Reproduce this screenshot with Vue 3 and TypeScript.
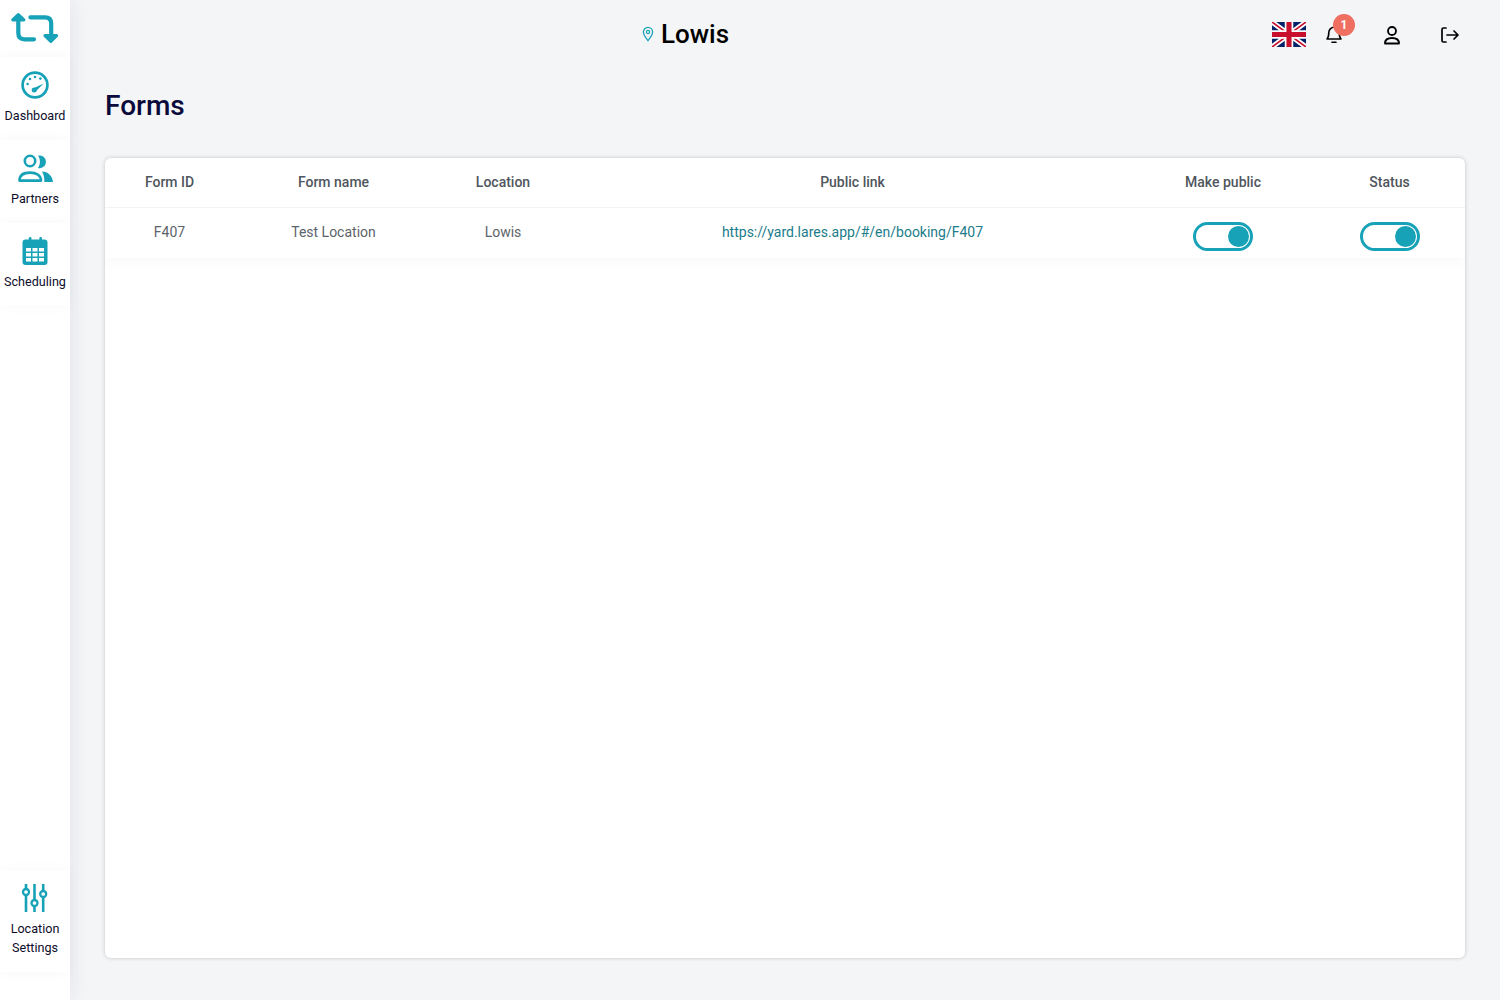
<script setup lang="ts">
interface NavItem { label: string; icon: string }
const navItems: NavItem[] = [
  { label: 'Dashboard', icon: 'dash' },
  { label: 'Partners', icon: 'partners' },
  { label: 'Scheduling', icon: 'cal' },
]
const headers: string[] = ['Form ID', 'Form name', 'Location', 'Public link', 'Make public', 'Status']
</script>

<template>
  <div class="page">
    <aside class="sidebar">
      <div class="logo">
        <svg width="70" height="57" viewBox="0 0 70 57" fill="none" stroke="#17a2b8" stroke-linecap="round" stroke-linejoin="round">
          <path d="M18.3 21 V33 Q18.3 39.3 24.6 39.3 H34" stroke-width="4.2"/>
          <path d="M30.4 17.3 H45 Q51.2 17.3 51.2 23.5 V34" stroke-width="4.2"/>
          <path d="M18.3 14.6 L12.8 20 H23.8 Z" fill="#17a2b8" stroke-width="3.2"/>
          <path d="M50.8 41.4 L45 35.6 H56.6 Z" fill="#17a2b8" stroke-width="3.2"/>
        </svg>
      </div>
      <a v-for="item in navItems" :key="item.icon" class="nav-item">
        <svg v-if="item.icon === 'dash'" width="32" height="32" viewBox="0 0 32 32" fill="none">
          <circle cx="16" cy="16" r="12.4" stroke="#17a2b8" stroke-width="2.7"/>
          <circle cx="15.2" cy="21" r="2.5" fill="#17a2b8"/>
          <path d="M14 19.6 L24.6 14.6 L16.6 22.4 Z" fill="#17a2b8"/>
          <g fill="#17a2b8"><circle cx="8.6" cy="15" r="1.3"/><circle cx="11" cy="10" r="1.3"/><circle cx="16" cy="8" r="1.3"/><circle cx="21.4" cy="9.6" r="1.3"/></g>
        </svg>
        <svg v-else-if="item.icon === 'partners'" width="36" height="32" viewBox="0 0 36 32" fill="none">
          <circle cx="13" cy="9" r="5.2" stroke="#17a2b8" stroke-width="2.6"/>
          <path d="M2.5 28.6 C2.5 23 7 20.6 13 20.6 C19 20.6 24 23 24 28.6 Z" stroke="#17a2b8" stroke-width="2.6" stroke-linejoin="round"/>
          <path d="M21 3.6 A6.4 6.4 0 1 1 21 16 C23.6 12.6 23.6 7.4 21 3.6 Z" fill="#17a2b8"/>
          <path d="M25 19.6 C31 19.6 35.4 24 36 30 H27.4 C27.4 26 26.8 22.6 25 19.6 Z" fill="#17a2b8"/>
        </svg>
        <svg v-else width="32" height="32" viewBox="0 0 32 32" fill="none">
          <rect x="9.8" y="2" width="2.6" height="6" rx="1.2" fill="#17a2b8"/>
          <rect x="20.4" y="2" width="2.6" height="6" rx="1.2" fill="#17a2b8"/>
          <rect x="3.5" y="4.5" width="25" height="25.5" rx="3" fill="#17a2b8"/>
          <g fill="#fff">
            <rect x="7" y="13" width="5" height="3.5"/><rect x="13.5" y="13" width="5" height="3.5"/><rect x="20" y="13" width="5" height="3.5"/>
            <rect x="7" y="18" width="5" height="3.5"/><rect x="13.5" y="18" width="5" height="3.5"/><rect x="20" y="18" width="5" height="3.5"/>
            <rect x="7" y="23" width="5" height="3.5"/><rect x="13.5" y="23" width="5" height="3.5"/><rect x="20" y="23" width="5" height="3.5"/>
          </g>
        </svg>
        <span class="nav-label">{{ item.label }}</span>
      </a>
      <div class="spacer"></div>
      <a class="nav-item bottom">
        <svg width="32" height="32" viewBox="0 0 32 32" fill="none" stroke="#17a2b8">
          <g stroke-width="2.6">
            <path d="M7 2 V6.5 M7 13.5 V30"/>
            <path d="M15.5 2 V17.5 M15.5 24.5 V30"/>
            <path d="M24.2 2 V8.5 M24.2 15.5 V30"/>
          </g>
          <g stroke-width="2.3">
            <circle cx="7" cy="10" r="3"/>
            <circle cx="15.5" cy="21" r="3"/>
            <circle cx="24.2" cy="12" r="3"/>
          </g>
        </svg>
        <span class="nav-label first">Location</span>
        <span class="nav-label">Settings</span>
      </a>
      <div class="sidebar-end"></div>
    </aside>

    <main class="main">
      <header class="topbar">
        <div class="place">
          <svg width="12" height="16" viewBox="0 0 12 16" fill="none" stroke="#17a2b8" stroke-width="1.3">
            <path d="M6 14.6 C3.5 11.5 1.4 8.8 1.4 6 A4.6 4.6 0 0 1 10.6 6 C10.6 8.8 8.5 11.5 6 14.6 Z"/>
            <circle cx="6" cy="6" r="1.6"/>
          </svg>
          <span class="place-name">Lowis</span>
        </div>
        <div class="actions">
          <svg class="flag" width="34" height="25" viewBox="0 0 60 44" preserveAspectRatio="none">
            <rect width="60" height="44" fill="#012169"/>
            <path d="M0 0 L60 44 M60 0 L0 44" stroke="#fff" stroke-width="9"/>
            <path d="M0 0 L60 44 M60 0 L0 44" stroke="#c8102e" stroke-width="3"/>
            <path d="M30 0 V44 M0 22 H60" stroke="#fff" stroke-width="15"/>
            <path d="M30 0 V44 M0 22 H60" stroke="#c8102e" stroke-width="9"/>
          </svg>
          <div class="bell">
            <svg width="20" height="22" viewBox="0 0 20 22" fill="none" stroke="#000" stroke-width="1.6" stroke-linejoin="round">
              <path d="M3 16 C4.5 14.5 4.8 12.5 4.8 9.5 A5.2 5.2 0 0 1 15.2 9.5 C15.2 12.5 15.5 14.5 17 16 Z"/>
              <path d="M8 19.2 H12" stroke-linecap="round"/>
            </svg>
            <span class="badge">1</span>
          </div>
          <svg class="user" width="20" height="22" viewBox="0 0 20 22" fill="none" stroke="#000" stroke-width="1.8">
            <circle cx="10" cy="7" r="4"/>
            <path d="M3 19.5 C3 15.5 6 14 10 14 C14 14 17 15.5 17 19.5 Z" stroke-linejoin="round"/>
          </svg>
          <svg class="logout" width="20" height="20" viewBox="0 0 20 20" fill="none" stroke="#000" stroke-width="1.7" stroke-linecap="round" stroke-linejoin="round">
            <path d="M6 3 H3.5 Q2 3 2 4.5 V15.5 Q2 17 3.5 17 H6"/>
            <path d="M7 10 H18 M14 6 L18 10 L14 14"/>
          </svg>
        </div>
      </header>

      <h1 class="title">Forms</h1>

      <section class="card">
        <div class="row head">
          <div v-for="h in headers" :key="h" class="cell">{{ h }}</div>
        </div>
        <div class="row body">
          <div class="cell">F407</div>
          <div class="cell">Test Location</div>
          <div class="cell">Lowis</div>
          <div class="cell link">https://yard.lares.app/#/en/booking/F407</div>
          <div class="cell toggle-cell"><span class="toggle"><span class="knob"></span></span></div>
          <div class="cell toggle-cell"><span class="toggle"><span class="knob"></span></span></div>
        </div>
      </section>
    </main>
  </div>
</template>

<style>
html, body { background: #f4f5f7; }
</style>

<style scoped>
.page {
  display: flex;
  width: 1500px;
  height: 1000px;
  background: #f4f5f7;
  font-family: Roboto, "Liberation Sans", sans-serif;
}
.sidebar {
  width: 70px;
  flex: none;
  background: #fff;
  display: flex;
  flex-direction: column;
  box-shadow: 6px 0 14px rgba(60, 60, 110, 0.06);
}
.logo {
  height: 57px;
  flex: none;
}
.logo svg { display: block; }
.nav-item {
  height: 83px;
  flex: none;
  display: flex;
  flex-direction: column;
  align-items: center;
  padding-top: 12px;
  box-sizing: border-box;
  background: #fff;
  box-shadow: 0 0 12px rgba(0, 0, 0, 0.035);
  color: #0d0d2b;
}
.nav-label {
  font-size: 12.6px;
  line-height: 19px;
  white-space: nowrap;
  margin-top: 5px;
}
.nav-item.bottom { height: 102px; }
.nav-item.bottom .nav-label { margin-top: 0; }
.nav-item.bottom .nav-label.first { margin-top: 5px; }
.spacer { flex: 1; }
.sidebar-end { height: 28px; flex: none; }
.main {
  flex: 1;
  min-width: 0;
  padding: 0 35px;
  display: flex;
  flex-direction: column;
}
.topbar {
  height: 68px;
  flex: none;
  position: relative;
  display: flex;
  align-items: center;
  justify-content: flex-end;
}
.place {
  position: absolute;
  left: 537px;
  top: 17px;
  display: flex;
  align-items: center;
  gap: 7px;
}
.place-name {
  font-size: 26px;
  font-weight: 500;
  line-height: 34px;
  color: #000;
}
.actions {
  display: flex;
  align-items: center;
  padding-right: 5px;
}
.flag { display: block; margin-right: 18px; margin-top: 1px; }
.bell { position: relative; width: 20px; height: 22px; margin-right: 38px; }
.bell svg { display: block; }
.badge {
  position: absolute;
  left: 9px;
  top: -9px;
  width: 22px;
  height: 22px;
  border-radius: 50%;
  background: #ef6f61;
  color: #fff;
  font-size: 12px;
  font-weight: 700;
  line-height: 22px;
  text-align: center;
}
.user { display: block; margin-right: 38px; margin-top: 2px; }
.logout { display: block; margin-top: 2px; }
.title {
  margin: 20px 0 0;
  font-size: 28px;
  font-weight: 500;
  line-height: 36px;
  color: #0b0b3b;
}
.card {
  margin-top: 34px;
  height: 800px;
  flex: none;
  background: #fff;
  border-radius: 6px;
  box-shadow: 0 0 4px rgba(0, 0, 0, 0.2);
  overflow: hidden;
}
.row {
  display: grid;
  grid-template-columns: 129px 199px 140px 559px 182px 151px;
  color: #4f565d;
  font-size: 14px;
}
.head {
  height: 50px;
  font-weight: 500;
  border-bottom: 1px solid #f3f3f4;
  box-sizing: border-box;
}
.body {
  height: 50px;
  color: #5c636a;
  box-shadow: 0 6px 10px rgba(0, 0, 0, 0.025);
  position: relative;
}
.cell {
  display: flex;
  align-items: center;
  justify-content: center;
  white-space: nowrap;
  padding-bottom: 2px;
}
.body .link { color: #1b7c8a; }
.toggle-cell { padding: 6px 0 0; }
.toggle {
  width: 60px;
  height: 29px;
  box-sizing: border-box;
  border: 3px solid #17a2b8;
  border-radius: 15px;
  position: relative;
  display: block;
}
.knob {
  position: absolute;
  right: 1px;
  top: 1px;
  width: 21px;
  height: 21px;
  border-radius: 50%;
  background: #17a2b8;
}
</style>
